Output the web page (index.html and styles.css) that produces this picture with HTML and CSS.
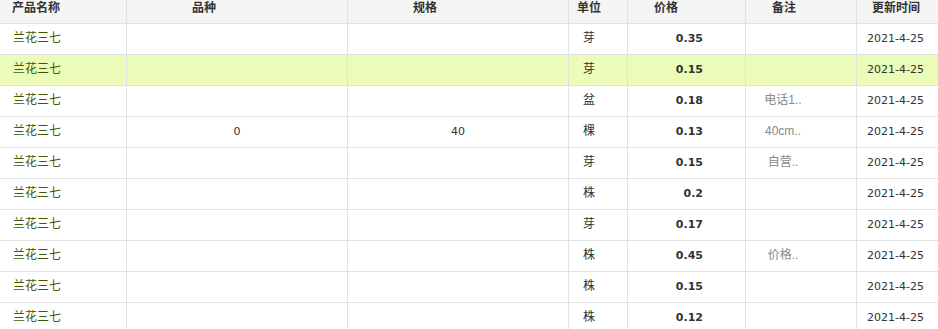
FILE: index.html
```html
<!DOCTYPE html>
<html lang="zh">
<head>
<meta charset="utf-8">
<title>产品价格</title>
<link rel="stylesheet" href="styles.css">
</head>
<body>
<div class="grid">
  <div class="row head">
    <div class="c c1">产品名称</div>
    <div class="c c2">品种</div>
    <div class="c c3">规格</div>
    <div class="c c4">单位</div>
    <div class="c c5">价格</div>
    <div class="c c6">备注</div>
    <div class="c c7">更新时间</div>
  </div>
  <div class="row"><div class="c c1">兰花三七</div><div class="c c2"></div><div class="c c3"></div><div class="c c4">芽</div><div class="c c5">0.35</div><div class="c c6"></div><div class="c c7">2021-4-25</div></div>
  <div class="row hl"><div class="c c1">兰花三七</div><div class="c c2"></div><div class="c c3"></div><div class="c c4">芽</div><div class="c c5">0.15</div><div class="c c6"></div><div class="c c7">2021-4-25</div></div>
  <div class="row"><div class="c c1">兰花三七</div><div class="c c2"></div><div class="c c3"></div><div class="c c4">盆</div><div class="c c5">0.18</div><div class="c c6">电话1..</div><div class="c c7">2021-4-25</div></div>
  <div class="row"><div class="c c1">兰花三七</div><div class="c c2">0</div><div class="c c3">40</div><div class="c c4">棵</div><div class="c c5">0.13</div><div class="c c6">40cm..</div><div class="c c7">2021-4-25</div></div>
  <div class="row"><div class="c c1">兰花三七</div><div class="c c2"></div><div class="c c3"></div><div class="c c4">芽</div><div class="c c5">0.15</div><div class="c c6">自营..</div><div class="c c7">2021-4-25</div></div>
  <div class="row"><div class="c c1">兰花三七</div><div class="c c2"></div><div class="c c3"></div><div class="c c4">株</div><div class="c c5">0.2</div><div class="c c6"></div><div class="c c7">2021-4-25</div></div>
  <div class="row"><div class="c c1">兰花三七</div><div class="c c2"></div><div class="c c3"></div><div class="c c4">芽</div><div class="c c5">0.17</div><div class="c c6"></div><div class="c c7">2021-4-25</div></div>
  <div class="row"><div class="c c1">兰花三七</div><div class="c c2"></div><div class="c c3"></div><div class="c c4">株</div><div class="c c5">0.45</div><div class="c c6">价格..</div><div class="c c7">2021-4-25</div></div>
  <div class="row"><div class="c c1">兰花三七</div><div class="c c2"></div><div class="c c3"></div><div class="c c4">株</div><div class="c c5">0.15</div><div class="c c6"></div><div class="c c7">2021-4-25</div></div>
  <div class="row"><div class="c c1">兰花三七</div><div class="c c2"></div><div class="c c3"></div><div class="c c4">株</div><div class="c c5">0.12</div><div class="c c6"></div><div class="c c7">2021-4-25</div></div>
</div>
</body>
</html>
```
FILE: styles.css
```css
html, body {
  margin: 0;
  padding: 0;
  background: #fff;
}
body {
  font-family: "Noto Sans CJK SC", sans-serif;
  font-size: 12px;
  color: #333;
  overflow: hidden;
}
.grid {
  width: 938px;
}
.row {
  display: grid;
  grid-template-columns: 127px 221px 221px 59px 118px 111px 81px;
  height: 31px;
  border-bottom: 1px solid #e2e2e2;
  box-sizing: border-box;
}
.row.hl {
  background: #eafcb7;
}
.c {
  box-sizing: border-box;
  border-right: 1px solid #e2e2e2;
  white-space: nowrap;
  overflow: hidden;
  line-height: 30px;
}
.c7 {
  border-right: none;
}
.row.head {
  height: 24px;
  background: #f5f5f5;
}
.head .c {
  font-weight: bold;
  line-height: 14px;
  text-align: left;
  color: #333;
  font-family: "Noto Sans CJK SC", sans-serif;
  font-size: 12px;
}
.head .c1 { padding-left: 12px; }
.head .c2 { padding-left: 65px; }
.head .c3 { padding-left: 65px; }
.head .c4 { padding-left: 8px; }
.head .c5 { padding-left: 26px; }
.head .c6 { padding-left: 26px; }
.head .c7 { padding-left: 15px; }

.c1 {
  padding-left: 13px;
  color: #435800;
  line-height: 26px;
}
.c2, .c3 {
  text-align: center;
  font-family: "DejaVu Sans", "Noto Sans CJK SC", sans-serif;
  font-size: 11px;
  color: #333;
}
.c4 {
  padding-left: 14px;
  line-height: 26px;
}
.c5 {
  text-align: right;
  padding-right: 42px;
  font-family: "DejaVu Sans", sans-serif;
  font-size: 11px;
  font-weight: bold;
  color: #333;
}
.c6 {
  text-align: center;
  padding-right: 36px;
  font-family: "Liberation Sans", "Noto Sans CJK SC", sans-serif;
  font-size: 12px;
  color: #888;
  line-height: 28px;
}
.c7 {
  padding-left: 10px;
  font-family: "DejaVu Sans", sans-serif;
  font-size: 11px;
  color: #333;
}
```
